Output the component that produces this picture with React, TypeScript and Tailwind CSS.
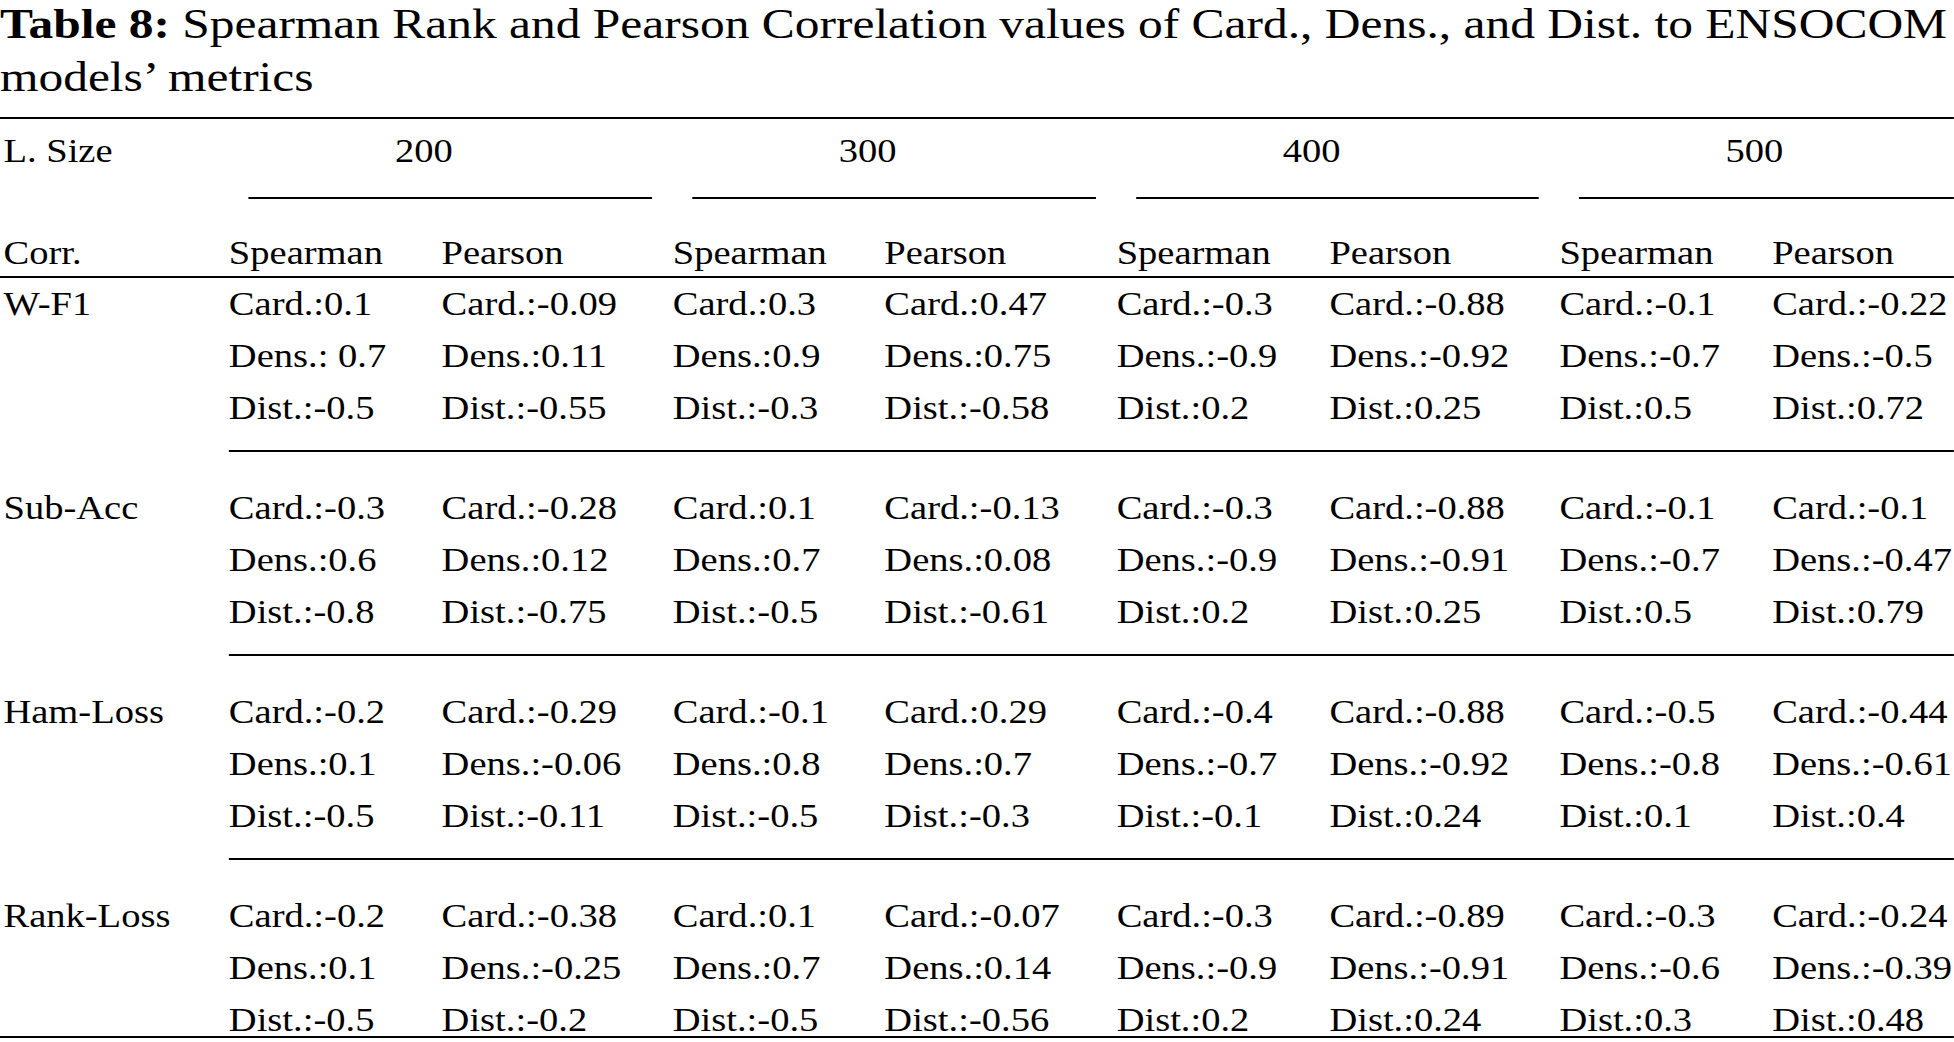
import React from 'react';

type Cell = [string, string, string];

interface MetricRow {
    name: string;
    cells: Cell[];
}

// values per metric: 8 columns (Spearman / Pearson for 200, 300, 400, 500)
const rows: MetricRow[] = [
    {
        name: 'W-F1',
        cells: [
            ['Card.:0.1', 'Dens.: 0.7', 'Dist.:-0.5'],
            ['Card.:-0.09', 'Dens.:0.11', 'Dist.:-0.55'],
            ['Card.:0.3', 'Dens.:0.9', 'Dist.:-0.3'],
            ['Card.:0.47', 'Dens.:0.75', 'Dist.:-0.58'],
            ['Card.:-0.3', 'Dens.:-0.9', 'Dist.:0.2'],
            ['Card.:-0.88', 'Dens.:-0.92', 'Dist.:0.25'],
            ['Card.:-0.1', 'Dens.:-0.7', 'Dist.:0.5'],
            ['Card.:-0.22', 'Dens.:-0.5', 'Dist.:0.72'],
        ],
    },
    {
        name: 'Sub-Acc',
        cells: [
            ['Card.:-0.3', 'Dens.:0.6', 'Dist.:-0.8'],
            ['Card.:-0.28', 'Dens.:0.12', 'Dist.:-0.75'],
            ['Card.:0.1', 'Dens.:0.7', 'Dist.:-0.5'],
            ['Card.:-0.13', 'Dens.:0.08', 'Dist.:-0.61'],
            ['Card.:-0.3', 'Dens.:-0.9', 'Dist.:0.2'],
            ['Card.:-0.88', 'Dens.:-0.91', 'Dist.:0.25'],
            ['Card.:-0.1', 'Dens.:-0.7', 'Dist.:0.5'],
            ['Card.:-0.1', 'Dens.:-0.47', 'Dist.:0.79'],
        ],
    },
    {
        name: 'Ham-Loss',
        cells: [
            ['Card.:-0.2', 'Dens.:0.1', 'Dist.:-0.5'],
            ['Card.:-0.29', 'Dens.:-0.06', 'Dist.:-0.11'],
            ['Card.:-0.1', 'Dens.:0.8', 'Dist.:-0.5'],
            ['Card.:0.29', 'Dens.:0.7', 'Dist.:-0.3'],
            ['Card.:-0.4', 'Dens.:-0.7', 'Dist.:-0.1'],
            ['Card.:-0.88', 'Dens.:-0.92', 'Dist.:0.24'],
            ['Card.:-0.5', 'Dens.:-0.8', 'Dist.:0.1'],
            ['Card.:-0.44', 'Dens.:-0.61', 'Dist.:0.4'],
        ],
    },
    {
        name: 'Rank-Loss',
        cells: [
            ['Card.:-0.2', 'Dens.:0.1', 'Dist.:-0.5'],
            ['Card.:-0.38', 'Dens.:-0.25', 'Dist.:-0.2'],
            ['Card.:0.1', 'Dens.:0.7', 'Dist.:-0.5'],
            ['Card.:-0.07', 'Dens.:0.14', 'Dist.:-0.56'],
            ['Card.:-0.3', 'Dens.:-0.9', 'Dist.:0.2'],
            ['Card.:-0.89', 'Dens.:-0.91', 'Dist.:0.24'],
            ['Card.:-0.3', 'Dens.:-0.6', 'Dist.:0.3'],
            ['Card.:-0.24', 'Dens.:-0.39', 'Dist.:0.48'],
        ],
    },
];

const sizes = ['200', '300', '400', '500'];

const colGrid = 'grid grid-cols-[185px_201px_184px_202px_185px_200px_185px_1fr]';

const App: React.FC = () => {
    return (
        <div className="w-[1954px] h-[1042px] overflow-hidden bg-white text-black">
            {/* the source image is stretched horizontally, so the page is laid out narrower and scaled */}
            <div className="w-[1699px] origin-top-left scale-x-115 font-[family-name:Liberation_Serif,Times_New_Roman,serif]">
                <p className="-mt-[3px] w-[1760px] text-[43px] leading-[53px]">
                    <span className="font-bold">Table 8:</span> Spearman Rank and Pearson Correlation values of Card., Dens., and Dist. to ENSOCOM models’ metrics
                </p>

                <div className="mt-[14px] h-[2px] bg-black" />

                {/* header */}
                <div className="pt-[6px] text-[33.5px] leading-[52px]">
                    <div className="flex">
                        <div className="w-[199px] shrink-0 pl-[3px]">L. Size</div>
                        <div className={`${colGrid} flex-1`}>
                            {sizes.map((size, i) => (
                                <div key={size} className="col-span-2">
                                    <div className="w-[339px] text-center">{size}</div>
                                    <div className={`mt-[20px] h-[2px] bg-black ml-[17px] ${i < 3 ? 'mr-[18px]' : ''}`} />
                                </div>
                            ))}
                        </div>
                    </div>

                    <div className="mt-[34px] flex pb-[3px] leading-[40px]">
                        <div className="w-[199px] shrink-0 pl-[3px]">Corr.</div>
                        <div className={`${colGrid} flex-1`}>
                            {sizes.map((size) => (
                                <React.Fragment key={size}>
                                    <div>Spearman</div>
                                    <div>Pearson</div>
                                </React.Fragment>
                            ))}
                        </div>
                    </div>
                </div>

                <div className="h-[2px] bg-black" />

                {/* body */}
                <div className="text-[33.5px] leading-[52px]">
                    {rows.map((row, i) => (
                        <div key={row.name}>
                            <div className={`flex ${i > 0 ? 'pt-[30px]' : ''}`}>
                                <div className="w-[199px] shrink-0 pl-[3px]">{row.name}</div>
                                <div className={`${colGrid} flex-1`}>
                                    {row.cells.map((cell, j) => (
                                        <div key={j} className="whitespace-nowrap">
                                            <div>{cell[0]}</div>
                                            <div>{cell[1]}</div>
                                            <div>{cell[2]}</div>
                                        </div>
                                    ))}
                                </div>
                            </div>
                            {i < rows.length - 1 ? (
                                <div className="mt-[16px] ml-[199px] h-[2px] bg-black" />
                            ) : (
                                <div className="-mt-[10px] h-[2px] bg-black" />
                            )}
                        </div>
                    ))}
                </div>
            </div>
        </div>
    );
};

export default App;
